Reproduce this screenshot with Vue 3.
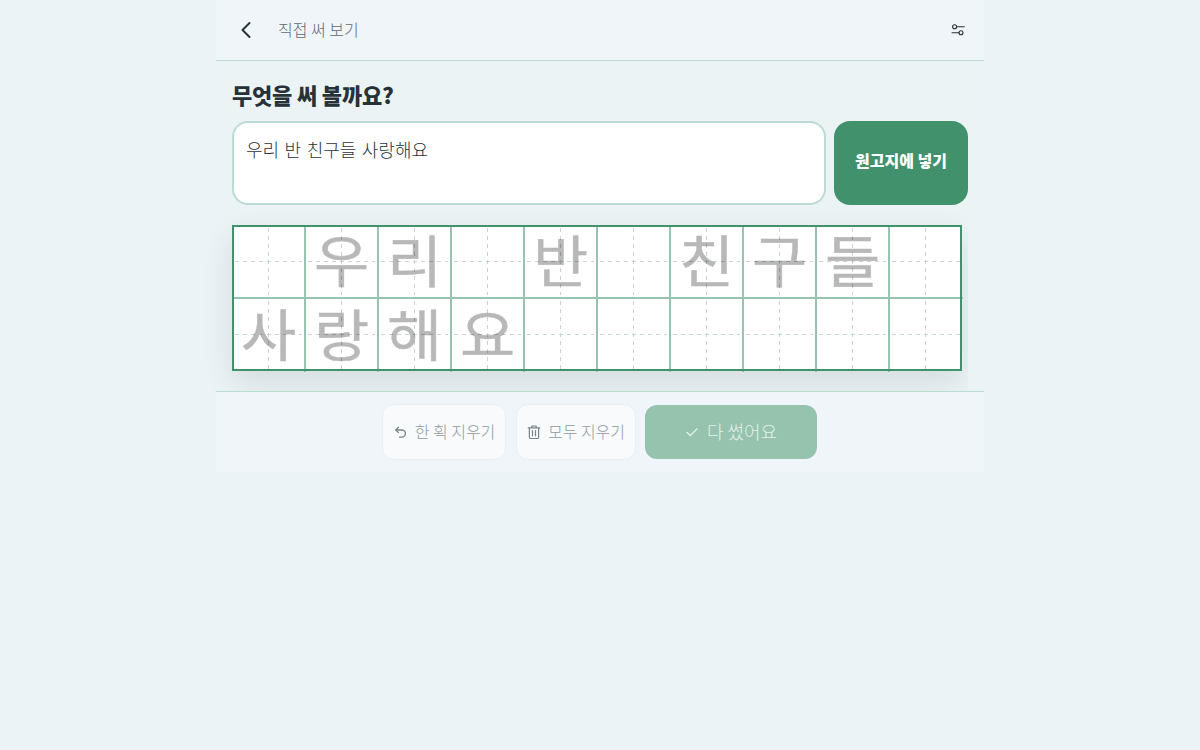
<script setup>
const chars = ['', '우', '리', '', '반', '', '친', '구', '들', '', '사', '랑', '해', '요', '', '', '', '', '', '']
</script>

<template>
  <div class="page">
    <div class="shell">
      <header class="top">
        <button class="back" aria-label="뒤로">
          <svg width="24" height="24" viewBox="0 0 24 24" fill="none" stroke="#263238" stroke-width="2" stroke-linecap="round" stroke-linejoin="round"><path d="M14.5 5l-7 7 7 7"/></svg>
        </button>
        <span class="title">직접 써 보기</span>
        <button class="tune" aria-label="설정">
          <svg width="16" height="16" viewBox="0 0 16 16" fill="none" stroke="#263238" stroke-width="1.1" stroke-linecap="round"><circle cx="4.6" cy="4.8" r="2"/><path d="M6.6 4.8h7.6M2 10.8h7"/><circle cx="11" cy="10.8" r="2"/></svg>
        </button>
      </header>

      <main class="main">
        <h1 class="ask">무엇을 써 볼까요?</h1>
        <div class="inputRow">
          <div class="box">우리 반 친구들 사랑해요</div>
          <button class="put"><span>원고지에 넣기</span></button>
        </div>
        <div class="sheet">
          <div class="grid">
            <div v-for="(c, i) in chars" :key="i" class="cell"><span v-if="c" class="glyph">{{ c }}</span></div>
          </div>
        </div>
      </main>

      <footer class="bottom">
        <button class="ghost one">
          <svg width="16" height="16" viewBox="0 0 16 16" fill="none" stroke="#7a8388" stroke-width="1.3" stroke-linecap="round" stroke-linejoin="round"><path d="M5.5 3.2L2.8 6l2.7 2.6"/><path d="M3 6h5.8a3.6 3.6 0 0 1 0 7.2H6.5"/></svg>
          <span>한 획 지우기</span>
        </button>
        <button class="ghost two">
          <svg width="16" height="16" viewBox="0 0 16 16" fill="none" stroke="#7a8388" stroke-width="1.2" stroke-linecap="round" stroke-linejoin="round"><path d="M2.2 3.8h11.6M5.8 3.6V2h4.4v1.6M3.4 3.8v9.4c0 .8.5 1.3 1.3 1.3h6.6c.8 0 1.3-.5 1.3-1.3V3.8M6.5 6.6v5.2M9.5 6.6v5.2"/></svg>
          <span>모두 지우기</span>
        </button>
        <button class="done">
          <svg width="14" height="14" viewBox="0 0 14 14" fill="none" stroke="#fff" stroke-width="1.2" stroke-linecap="round" stroke-linejoin="round" opacity=".85"><path d="M2 7.4l3.3 3.2L12 3.8"/></svg>
          <span>다 썼어요</span>
        </button>
      </footer>
    </div>
  </div>
</template>

<style>
html, body { margin: 0; background: #ebf3f6; }
</style>

<style scoped>
* { box-sizing: border-box; }
.page {
  min-height: 750px;
  background: #ebf3f6;
  font-family: "Noto Sans CJK KR", "Noto Sans", sans-serif;
}
.shell { width: 768px; margin: 0 auto; }
button { font-family: inherit; padding: 0; border: 0; background: none; }
.top {
  height: 61px;
  display: flex;
  align-items: center;
  padding: 0 16px;
  background: #eff5f9;
  border-bottom: 1px solid #bddbd2;
}
.back { width: 30px; height: 30px; display: flex; align-items: center; justify-content: center; }
.title { margin: 0 0 2px 16px; font-size: 16px; font-weight: 300; color: #5f6b70; }
.tune { margin-left: auto; width: 16px; height: 16px; margin-right: 2px; display: flex; }
.main { padding: 15px 16px 20px; background: #ebf3f5; }
.ask {
  margin: 0 0 9px;
  font-size: 22px;
  line-height: 36px;
  height: 36px;
  font-weight: 900;
  color: #263238;
  letter-spacing: -0.2px;
}
.inputRow { display: flex; gap: 8px; height: 84px; }
.box {
  flex: 1;
  background: #fff;
  border: 2px solid #bddbd2;
  border-radius: 16px;
  padding: 13px 12px;
  font-size: 18px;
  line-height: 26px;
  font-weight: 300;
  word-spacing: 1.5px;
  color: #263238;
}
.put {
  width: 134px;
  border-radius: 16px;
  background: #40916c;
  color: #fff;
  font-size: 16px;
  font-weight: 900;
}
.put span { display: block; margin-bottom: 6px; }
.sheet {
  margin-top: 20px;
  height: 146px;
  clip-path: inset(-40px 0 -40px -40px);
}
.grid {
  width: 730px;
  height: 146px;
  display: grid;
  grid-template-columns: repeat(10, 73px);
  grid-template-rows: repeat(2, 73px);
  padding: 1px 0 0 1px;
  background: #fff;
  position: relative;
  box-shadow: 0 12px 28px rgba(38, 50, 56, .11);
}
.grid::after {
  content: "";
  position: absolute;
  inset: 0;
  border: 2px solid #40916c;
  pointer-events: none;
  z-index: 2;
}
.cell {
  position: relative;
  border-right: 2px solid #96c4b1;
  border-bottom: 2px solid #96c4b1;
  display: flex;
  align-items: center;
  justify-content: center;
  min-width: 0;
}
.cell:nth-child(10n) { border-right: 0; }
.cell:nth-child(n+11) { border-bottom: 0; }
.cell::before {
  content: "";
  position: absolute;
  left: 2px;
  right: 2px;
  top: 35px;
  height: 1px;
  background: repeating-linear-gradient(90deg, #c6d5d1 0 4px, transparent 4px 8px);
}
.cell::after {
  content: "";
  position: absolute;
  top: 2px;
  bottom: 2px;
  left: 35px;
  width: 1px;
  background: repeating-linear-gradient(180deg, #c6d5d1 0 4px, transparent 4px 8px);
}
.glyph {
  position: relative;
  display: block;
  font-size: 60px;
  line-height: 58px;
  height: 58px;
  margin-bottom: 7px;
  font-weight: 400;
  -webkit-text-stroke: 0.5px #b8b8b8;
  color: #b8b8b8;
  z-index: 1;
  mix-blend-mode: multiply;
  transform: scaleY(.92);
}
.bottom {
  position: relative;
  z-index: 1;
  height: 81px;
  display: flex;
  justify-content: center;
  align-items: center;
  gap: 9.5px;
  padding-right: 1px;
  background: #eff5f9;
  border-top: 1px solid #b9dbd0;
}
.ghost, .done {
  height: 56px;
  border-radius: 12px;
  display: flex;
  align-items: center;
  justify-content: center;
  gap: 6px;
  font-size: 16px;
  font-weight: 300;
}
.ghost span, .done span { margin-bottom: 2px; }
.ghost {
  background: #f8fafc;
  border: 1px solid #e9eff3;
  color: #8f9a9f;
}
.one { width: 124px; }
.two { width: 120px; }
.done {
  width: 172px;
  height: 54px;
  background: #95c3ae;
  color: #e4f1ec;
  font-size: 18px;
  gap: 8px;
}
</style>
